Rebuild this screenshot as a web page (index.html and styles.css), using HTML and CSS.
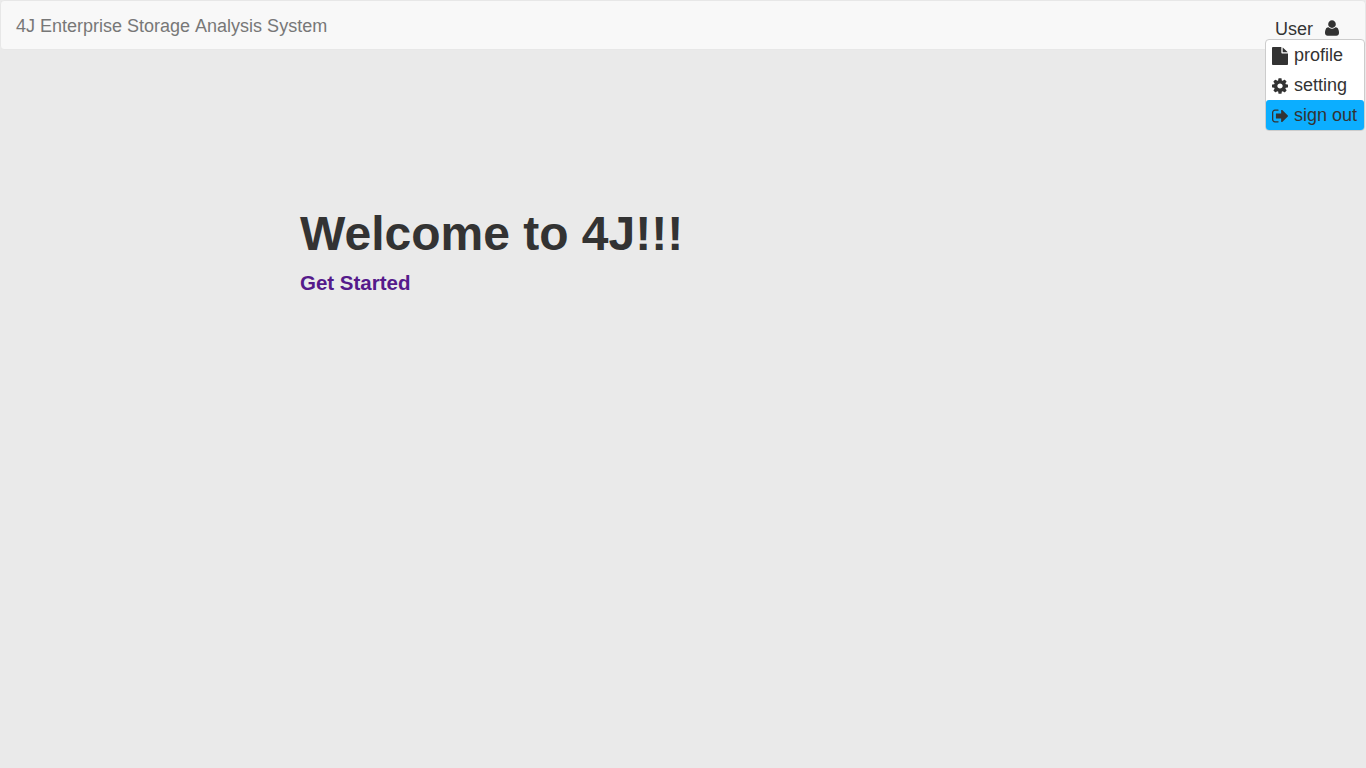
FILE: index.html
```html
<!DOCTYPE html>
<html lang="en">
<head>
<meta charset="utf-8">
<title>4J Enterprise Storage Analysis System</title>
<link rel="stylesheet" href="styles.css">
</head>
<body>
<nav class="navbar">
  <a class="brand">4J Enterprise Storage Analysis System</a>
  <div class="user">
    <span>User</span>
    <svg class="icon user-icon" width="14" height="18" preserveAspectRatio="none" viewBox="0 -1536 1408 1792"><path transform="scale(1 -1)" d="M1408 131q0 -120 -73 -189.5t-194 -69.5h-874q-121 0 -194 69.5t-73 189.5q0 53 3.5 103.5t14 109t26.5 108.5t43 97.5t62 81t85.5 53.5t111.5 20q9 0 42 -21.5t74.5 -48t108 -48t133.5 -21.5t133.5 21.5t108 48t74.5 48t42 21.5q61 0 111.5 -20t85.5 -53.5t62 -81t43 -97.5t26.5 -108.5t14 -109t3.5 -103.5zM1088 1024q0 -159 -112.5 -271.5t-271.5 -112.5t-271.5 112.5t-112.5 271.5t112.5 271.5t271.5 112.5t271.5 -112.5t112.5 -271.5z"/></svg>
    <ul class="menu">
      <li class="item"><svg class="icon" width="16" height="18" preserveAspectRatio="none" viewBox="0 -1536 1536 1792"><path transform="scale(1 -1)" d="M1024 1024v472q22 -14 36 -28l408 -408q14 -14 28 -36h-472zM896 992q0 -40 28 -68t68 -28h544v-1056q0 -40 -28 -68t-68 -28h-1344q-40 0 -68 28t-28 68v1600q0 40 28 68t68 28h800v-544z"/></svg><span>profile</span></li>
      <li class="item"><svg class="icon" width="16" height="18" preserveAspectRatio="none" viewBox="0 -1536 1536 1792"><path transform="scale(1 -1)" d="M1024 640q0 106 -75 181t-181 75t-181 -75t-75 -181t75 -181t181 -75t181 75t75 181zM1536 749v-222q0 -12 -8 -23t-20 -13l-185 -28q-19 -54 -39 -91q35 -50 107 -138q10 -12 10 -25t-9 -23q-27 -37 -99 -108t-94 -71q-12 0 -26 9l-138 108q-44 -23 -91 -38q-16 -136 -29 -186q-7 -28 -36 -28h-222q-14 0 -24.5 8.5t-11.5 21.5l-28 184q-49 16 -90 37l-141 -107q-10 -9 -25 -9q-14 0 -25 11q-126 114 -165 168q-7 10 -7 23q0 12 8 23q15 21 51 66.5t54 70.5q-27 50 -41 99l-183 27q-13 2 -21 12.5t-8 23.5v222q0 12 8 23t19 13l186 28q14 46 39 92q-40 57 -107 138q-10 12 -10 24q0 10 9 23q26 36 98.5 107.5t94.5 71.5q13 0 26 -10l138 -107q44 23 91 38q16 136 29 186q7 28 36 28h222q14 0 24.5 -8.5t11.5 -21.5l28 -184q49 -16 90 -37l142 107q9 9 24 9q13 0 25 -10q129 -119 165 -170q7 -8 7 -22q0 -12 -8 -23q-15 -21 -51 -66.5t-54 -70.5q26 -50 41 -98l183 -28q13 -2 21 -12.5t8 -23.5z"/></svg><span>setting</span></li>
      <li class="item active"><svg class="icon" width="16" height="18" preserveAspectRatio="none" viewBox="0 -1536 1568 1792"><path transform="scale(1 -1)" d="M640 96q0 -4 1 -20t0.5 -26.5t-3 -23.5t-10 -19.5t-20.5 -6.5h-320q-119 0 -203.5 84.5t-84.5 203.5v704q0 119 84.5 203.5t203.5 84.5h320q13 0 22.5 -9.5t9.5 -22.5q0 -4 1 -20t0.5 -26.5t-3 -23.5t-10 -19.5t-20.5 -6.5h-320q-66 0 -113 -47t-47 -113v-704q0 -66 47 -113t113 -47h288h11h13t11.5 -1t11.5 -3t8 -5.5t7 -9t2 -13.5zM1568 640q0 -26 -19 -45l-544 -544q-19 -19 -45 -19t-45 19t-19 45v288h-448q-26 0 -45 19t-19 45v384q0 26 19 45t45 19h448v288q0 26 19 45t45 19t45 -19l544 -544q19 -19 19 -45z"/></svg><span>sign out</span></li>
    </ul>
  </div>
</nav>
<main class="welcome">
  <h1 class="title">Welcome to 4J!!!</h1>
  <a class="start">Get Started</a>
</main>
</body>
</html>
```

FILE: styles.css
```css
* {
  box-sizing: border-box;
}

body {
  margin: 0;
  background: #eaeaea;
  color: #333;
  font-family: "Liberation Sans", Arial, sans-serif;
  font-size: 18px;
  line-height: 20px;
}

.navbar {
  display: flex;
  justify-content: space-between;
  height: 50px;
  padding: 15px 26px 0 15px;
  background: #f8f8f8;
  border: 1px solid #e7e7e7;
  border-radius: 4px;
}

.brand {
  color: #777;
  font-kerning: none;
}

.user {
  position: relative;
  display: flex;
  gap: 12px;
  height: 20px;
  margin-top: 3px;
}

.icon {
  display: block;
  flex: none;
  fill: #333;
}

.menu {
  position: absolute;
  top: 20px;
  right: -26px;
  width: 100px;
  margin: 0;
  padding: 0;
  list-style: none;
  background: #fff;
  border: 1px solid #ccc;
  border-radius: 4px;
}

.item {
  display: grid;
  grid-template-columns: 16px auto;
  justify-content: start;
  align-items: center;
  column-gap: 6px;
  height: 30px;
  padding-left: 6px;
  border-radius: 3px;
  white-space: nowrap;
}

.item .icon {
  margin-top: 2px;
}

.active {
  background: #0caeff;
}

.welcome {
  margin-left: 300px;
  padding-top: 157px;
}

.title {
  margin: 0 0 12px;
  font-size: 48px;
  line-height: 53px;
}

.start {
  color: #551a8b;
  font-size: 20.5px;
  font-weight: bold;
  line-height: 22px;
}
```
